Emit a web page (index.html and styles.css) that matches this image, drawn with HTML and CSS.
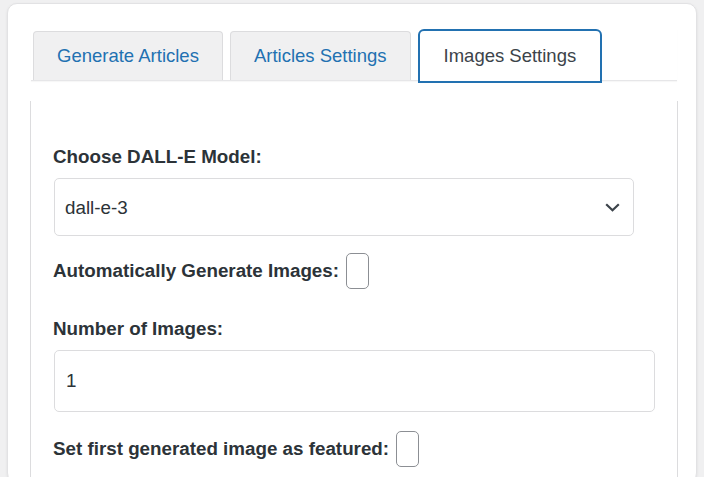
FILE: index.html
```html
<!DOCTYPE html>
<html lang="en">
<head>
    <meta charset="UTF-8">
    <meta name="viewport" content="width=device-width, initial-scale=1.0">
    <title>Images Settings</title>
    <link rel="stylesheet" href="styles.css">
</head>
<body>
    <div class="settings-card">
        <nav class="tab-nav">
            <a class="tab" href="#">Generate Articles</a>
            <a class="tab" href="#">Articles Settings</a>
            <a class="tab active" href="#">Images Settings</a>
        </nav>

        <div class="tab-panel">
            <div class="field">
                <label class="field-label" for="dalleModel">Choose DALL-E Model:</label>
                <div class="select-wrap">
                    <select id="dalleModel" class="control">
                        <option>dall-e-3</option>
                        <option>dall-e-2</option>
                    </select>
                    <svg class="chevron" width="15" height="9" viewBox="0 0 15 9">
                        <polyline points="1.2,1.2 7.5,7.3 13.8,1.2" fill="none" stroke="#3c434a" stroke-width="2.2"/>
                    </svg>
                </div>
            </div>

            <div class="check-row">
                <label for="autoImages">Automatically Generate Images:</label>
                <input type="checkbox" id="autoImages" class="check">
            </div>

            <div class="field field-number">
                <label class="field-label" for="imageCount">Number of Images:</label>
                <input type="number" id="imageCount" class="control number-input" value="1">
            </div>

            <div class="check-row">
                <label for="featuredImage">Set first generated image as featured:</label>
                <input type="checkbox" id="featuredImage" class="check">
            </div>
        </div>
    </div>
</body>
</html>
```

FILE: styles.css
```css
* {
    margin: 0;
    padding: 0;
    box-sizing: border-box;
}

body {
    font-family: 'Liberation Sans', Arial, sans-serif;
    background: #f0f0f1;
    color: #2c3338;
    overflow: hidden;
    height: 477px;
}

.settings-card {
    margin: 3px 0 0 7px;
    width: 690px;
    height: 480px;
    background: #fff;
    border: 1px solid #e2e2e4;
    border-radius: 10px;
    box-shadow: 0 1px 3px rgba(0, 0, 0, 0.08);
    padding: 25px 19px 0 23px;
}

/* tabs */
.tab-nav {
    display: flex;
    align-items: flex-end;
    padding-left: 2px;
    border-bottom: 1px solid #e6e6e8;
    box-shadow: 0 1px 1px rgba(0, 0, 0, 0.03);
}

.tab {
    display: flex;
    align-items: center;
    height: 49px;
    padding: 0 23px;
    margin-right: 7px;
    background: #f0f0f1;
    border: 1px solid #dcdcde;
    border-bottom: none;
    border-radius: 4px 4px 0 0;
    color: #2271b1;
    font-size: 18.5px;
    text-decoration: none;
}

.tab.active {
    height: 54px;
    margin-bottom: -3px;
    padding: 0 24px 1px;
    background: #fff;
    border: 2px solid #2271b1;
    border-radius: 6px 6px 0 0;
    color: #3c434a;
}

/* panel */
.tab-panel {
    margin: 20px -1px 0;
    height: 380px;
    border-left: 1px solid #dcdcde;
    border-right: 1px solid #dcdcde;
    padding: 44px 0 0 22px;
}

.field {
    margin-bottom: 17px;
}

.field-number {
    margin-bottom: 19px;
}

.field-label {
    display: block;
    margin-bottom: 9px;
    font-size: 18.8px;
    line-height: 24px;
    font-weight: bold;
}

.control {
    display: block;
    margin-left: 1px;
    background: #fff;
    border: 1px solid #dcdcde;
    border-radius: 5px;
    font-family: inherit;
    font-size: 18.8px;
    color: #2c3338;
    padding: 0 10px;
    outline: none;
}

.select-wrap {
    position: relative;
    width: 581px;
}

.select-wrap select {
    width: 580px;
    height: 58px;
    appearance: none;
    -webkit-appearance: none;
}

.chevron {
    position: absolute;
    right: 14px;
    top: 25px;
    pointer-events: none;
}

.number-input {
    width: 601px;
    height: 62px;
    padding-left: 11px;
    -moz-appearance: textfield;
}

.number-input::-webkit-inner-spin-button,
.number-input::-webkit-outer-spin-button {
    -webkit-appearance: none;
    margin: 0;
}

.check-row {
    font-size: 18.8px;
    line-height: 24px;
    font-weight: bold;
    margin-bottom: 28px;
}

.check {
    appearance: none;
    -webkit-appearance: none;
    width: 23px;
    height: 36px;
    margin-left: 2px;
    vertical-align: -12px;
    background: #fff;
    border: 1px solid #8c8f94;
    border-radius: 5px;
}
```
